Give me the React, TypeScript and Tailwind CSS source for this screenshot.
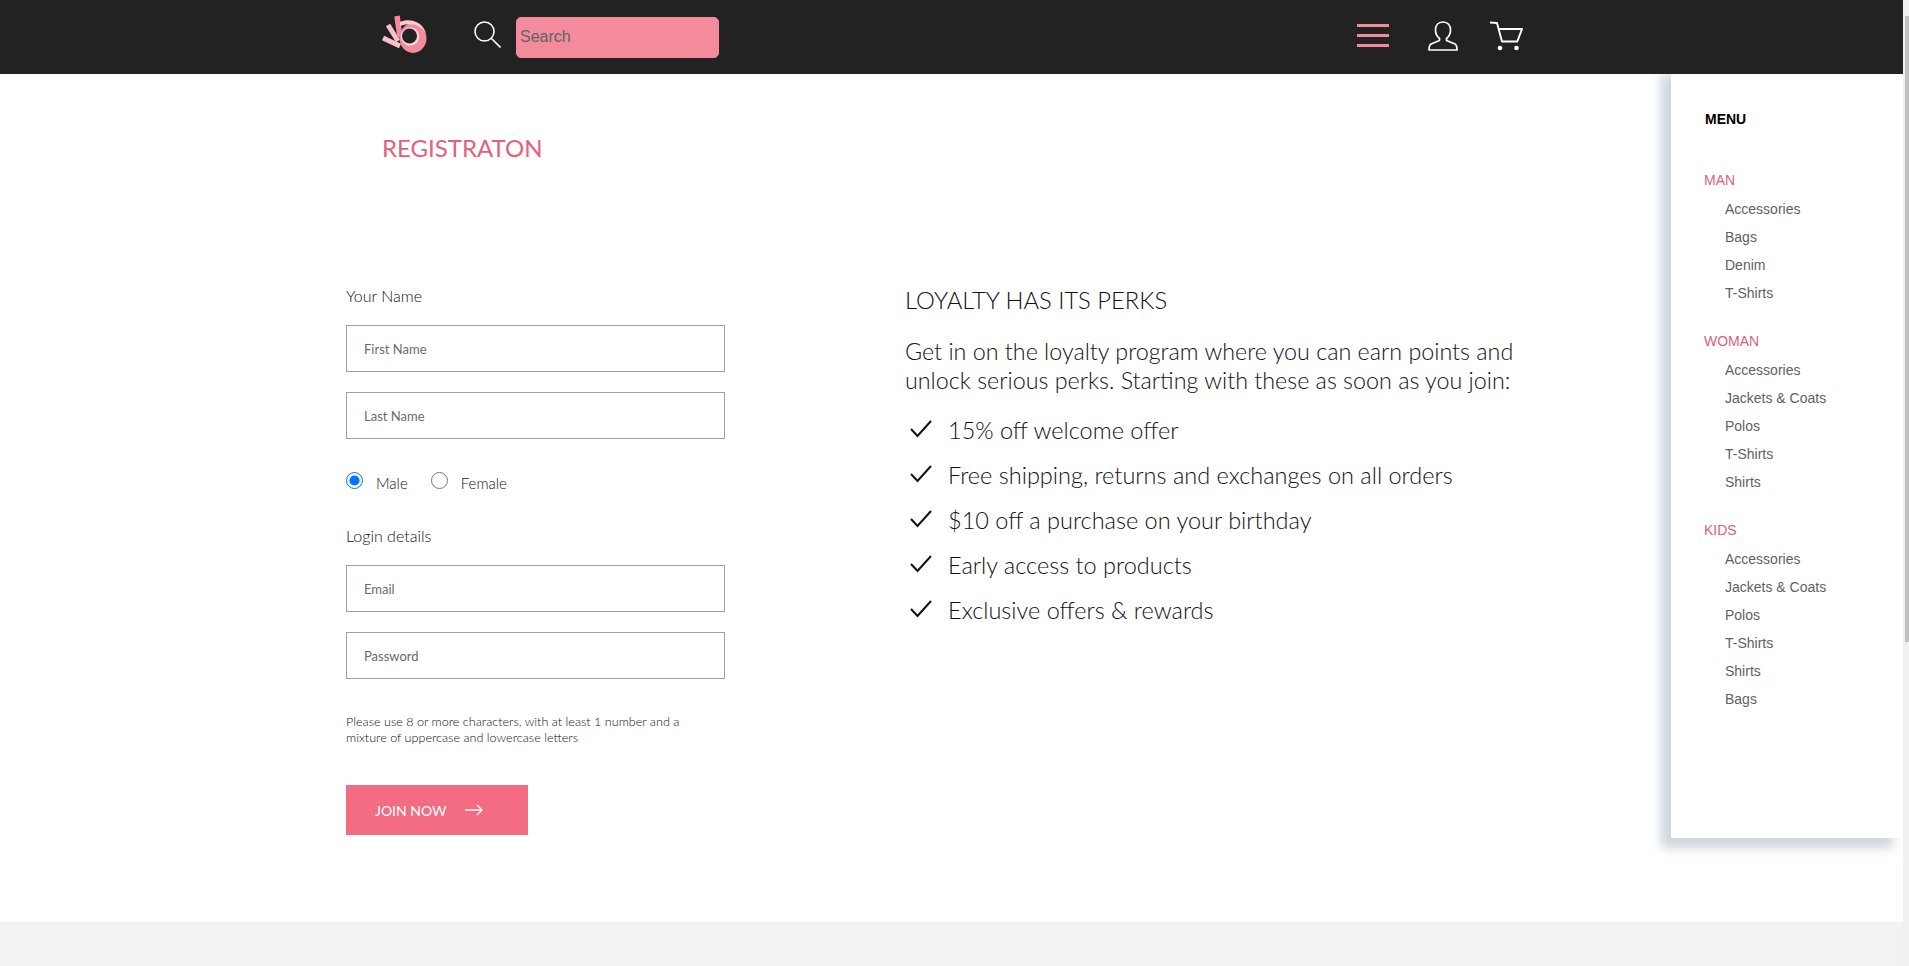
const manItems = ["Accessories", "Bags", "Denim", "T-Shirts"];
const womanItems = ["Accessories", "Jackets & Coats", "Polos", "T-Shirts", "Shirts"];
const kidsItems = ["Accessories", "Jackets & Coats", "Polos", "T-Shirts", "Shirts", "Bags"];
const perks = [
  "15% off welcome offer",
  "Free shipping, returns and exchanges on all orders",
  "$10 off a purchase on your birthday",
  "Early access to products",
  "Exclusive offers & rewards",
];

function Logo() {
  return (
    <svg className="-mt-[4px]" width="46" height="40" viewBox="0 0 46 40" fill="none">
      <path d="M6 10 L16 26" stroke="#f9c0ca" strokeWidth="5" />
      <path d="M1 23 L18 31" stroke="#f9c0ca" strokeWidth="5" />
      <path d="M15 1 L18 22" stroke="#f48b9d" strokeWidth="5.5" />
      <ellipse cx="31" cy="23" rx="13.5" ry="15" fill="#f48b9d" />
      <path d="M18 7 C27 3 40 6 44 18 C39 10 28 7 18 11 Z" fill="#fbc9d2" />
      <circle cx="28" cy="21.5" r="9.2" fill="#fbd3da" />
      <circle cx="27.5" cy="21" r="7.5" fill="#222222" />
    </svg>
  );
}

function SearchIcon() {
  return (
    <svg className="-mt-[6px]" width="27" height="27" viewBox="0 0 27 27" fill="none" stroke="#fff" strokeWidth="1.6">
      <circle cx="10.5" cy="10.5" r="9.5" />
      <path d="M17.5 17.5 L26.5 26.5" />
    </svg>
  );
}

function UserIcon() {
  return (
    <svg className="-mt-[3px]" width="30" height="30" viewBox="0 0 30 30" fill="none" stroke="#fff" strokeWidth="1.7" strokeLinejoin="round">
      <path d="M15 1 C10 1 7.5 4.5 7.5 9 C7.5 13 9.5 16 11.5 17.5 L11.5 19.5 L3 23 C1.5 24 1 26 1 29 L29 29 C29 26 28.5 24 27 23 L18.5 19.5 L18.5 17.5 C20.5 16 22.5 13 22.5 9 C22.5 4.5 20 1 15 1 Z" />
    </svg>
  );
}

function CartIcon() {
  return (
    <svg className="-mt-[3px]" width="33" height="30" viewBox="0 0 33 30" fill="none" stroke="#fff" strokeWidth="1.9" strokeLinejoin="round">
      <path d="M0 1.5 L7 2 L12 20.5 L28 20.5" />
      <path d="M9 8 L32 8 L27.5 20" />
      <circle cx="10" cy="27" r="2.3" fill="#fff" stroke="none" />
      <circle cx="26.5" cy="27" r="2.3" fill="#fff" stroke="none" />
    </svg>
  );
}

function Check() {
  return (
    <svg width="22" height="18" viewBox="0 0 22 18" fill="none" stroke="#111" strokeWidth="2">
      <path d="M1 9 L7.5 16 L21 1" />
    </svg>
  );
}

function MenuGroup({ title, items, className }: { title: string; items: string[]; className: string }) {
  return (
    <div className={className}>
      <div className="text-sm leading-[20px] text-[#e0607a]">{title}</div>
      <ul className="mt-[9px] pl-[21px] flex flex-col gap-[8px]">
        {items.map((item, idx) => (
          <li key={idx} className="text-sm leading-[20px] text-[#5f5f5f]">
            {item}
          </li>
        ))}
      </ul>
    </div>
  );
}

function TextField({ placeholder, className }: { placeholder: string; className: string }) {
  return (
    <input
      placeholder={placeholder}
      className={`block w-[379px] h-[47px] border border-[#a0a0a0] bg-white px-[17px] text-[13px] font-normal outline-none placeholder:text-[#6a6a6a] ${className}`}
    />
  );
}

export default function App() {
  return (
    <div className="relative h-[966px] w-[1909px] overflow-hidden bg-white font-['Lato',sans-serif]">
      {/* scrollbar */}
      <div className="absolute right-0 top-0 bottom-0 flex w-[6px] flex-col items-end bg-[#f1f1f1] pt-[16px] pb-[324px]">
        <div className="w-[4px] flex-1 bg-[#c1c1c1]" />
      </div>

      <div className="flex h-full w-[1903px] flex-col">
        <header className="relative z-10 flex h-[74px] shrink-0 items-center bg-[#222222] pl-[382px]">
          <Logo />
          <div className="ml-[46px] flex items-center">
            <SearchIcon />
          </div>
          <input
            placeholder="Search"
            className="ml-[15px] h-[41px] w-[203px] rounded-[5px] border border-[#f48b9d] bg-[#f48b9d] px-[3px] font-['Liberation_Sans',sans-serif] text-base outline-none placeholder:text-[#5f6368]"
          />
          <div className="ml-[638px] -mt-[3px] flex flex-col gap-[7px]">
            <span className="block h-[3px] w-[32px] bg-[#f48b9d]" />
            <span className="block h-[3px] w-[32px] bg-[#f48b9d]" />
            <span className="block h-[3px] w-[32px] bg-[#f48b9d]" />
          </div>
          <div className="ml-[39px] flex">
            <UserIcon />
          </div>
          <div className="ml-[32px] flex">
            <CartIcon />
          </div>
        </header>

        <main className="flex-1 pl-[346px]">
          <h1 className="ml-[36px] mt-[59px] text-[24px] leading-[29px] font-normal text-[#e5607a]">REGISTRATON</h1>

          <div className="mt-[124px] flex">
            <form className="w-[379px] pt-[1px]">
              <div className="text-[16px] leading-[18px] font-light text-[#111]">Your Name</div>
              <TextField placeholder="First Name" className="mt-[20px]" />
              <TextField placeholder="Last Name" className="mt-[20px]" />
              <div className="mt-[30px] flex items-center text-[15px] leading-[18px] font-light text-[#111]">
                <input type="radio" name="gender" defaultChecked className="m-0 h-[17px] w-[17px] accent-[#0075ff]" />
                <span className="ml-[13px] mt-[5px]">Male</span>
                <input type="radio" name="gender" className="ml-[23px] h-[17px] w-[17px]" />
                <span className="ml-[13px] mt-[5px]">Female</span>
              </div>
              <div className="mt-[35px] text-[16px] leading-[18px] font-light text-[#111]">Login details</div>
              <TextField placeholder="Email" className="mt-[20px]" />
              <TextField placeholder="Password" className="mt-[20px]" />
              <p className="mt-[35px] w-[345px] text-[12.6px] leading-[16px] font-light text-[#111]">
                Please use 8 or more characters, with at least 1 number and a mixture of uppercase and lowercase letters
              </p>
              <button
                type="button"
                className="mt-[39px] flex h-[50px] w-[182px] items-center bg-[#f36c82] pl-[29px] text-[14px] text-white"
              >
                JOIN NOW
                <svg className="ml-[18px]" width="18" height="12" viewBox="0 0 18 12" fill="none" stroke="#fff" strokeWidth="1.3">
                  <path d="M0 6 L17 6 M12 1 L17 6 L12 11" />
                </svg>
              </button>
            </form>

            <section className="ml-[180px] w-[640px] font-light text-[#111]">
              <h2 className="text-[23.8px] leading-[29px] font-light">LOYALTY HAS ITS PERKS</h2>
              <p className="mt-[22px] text-[23.3px] leading-[29px]">
                Get in on the loyalty program where you can earn points and
                <br />
                unlock serious perks. Starting with these as soon as you join:
              </p>
              <ul className="mt-[13px] flex flex-col">
                {perks.map((perk) => (
                  <li key={perk} className="flex h-[45px] items-center text-[23.5px]">
                    <span className="ml-[5px] mr-[16px] flex -mt-[4px]">
                      <Check />
                    </span>
                    {perk}
                  </li>
                ))}
              </ul>
            </section>
          </div>
        </main>

        <footer className="h-[44px] shrink-0 bg-[#f2f2f2]" />
      </div>

      {/* side menu, overlays page and slides under the header */}
      <aside className="absolute left-[1671px] top-[64px] h-[774px] w-[232px] bg-white pl-[33px] pt-[45px] font-['Liberation_Sans',sans-serif] shadow-[-10px_10px_10px_rgba(190,200,208,0.75)]">
        <div className="ml-[1px] text-sm leading-[20px] font-bold text-black">MENU</div>
        <MenuGroup title="MAN" items={manItems} className="mt-[41px]" />
        <MenuGroup title="WOMAN" items={womanItems} className="mt-[28px]" />
        <MenuGroup title="KIDS" items={kidsItems} className="mt-[28px]" />
      </aside>
    </div>
  );
}
